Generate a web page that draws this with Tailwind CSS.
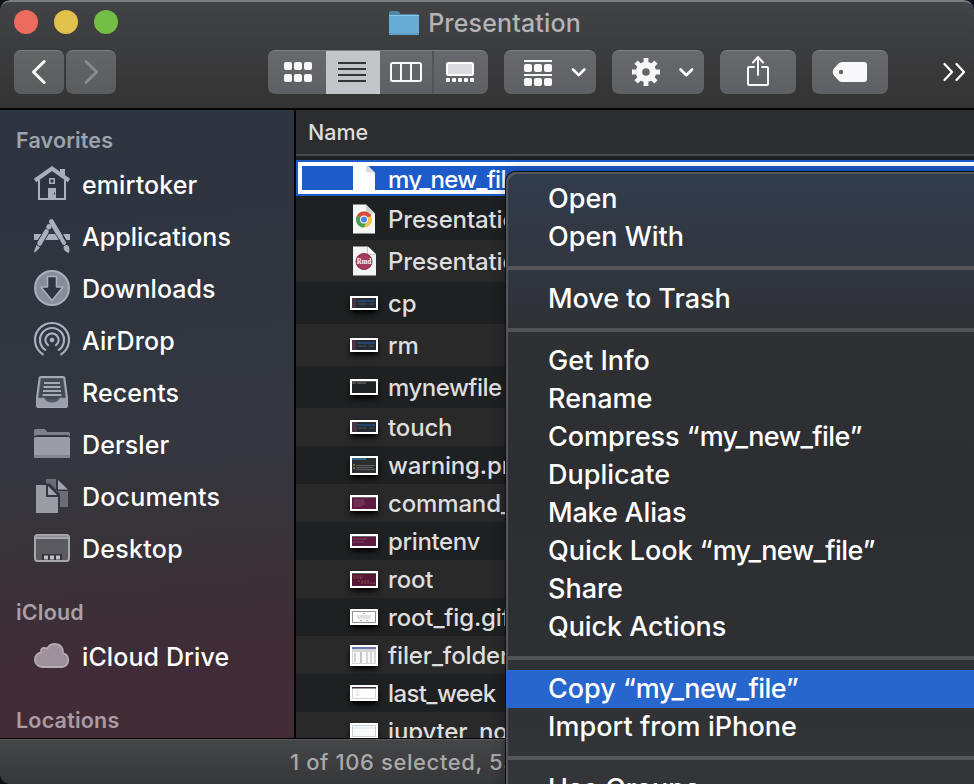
<!DOCTYPE html>
<html lang="en">
<head>
<meta charset="utf-8">
<title>Presentation</title>
<script src="https://cdn.jsdelivr.net/npm/@tailwindcss/browser@4"></script>
</head>
<body class="bg-[#0d111b] font-['Inter','Liberation_Sans',sans-serif] overflow-hidden">
<div class="relative w-[974px] h-[784px] overflow-hidden rounded-[10px] rounded-br-none flex flex-col bg-[#1e1f20]">

  <!-- Title bar and toolbar -->
  <header class="shrink-0 h-[110px] rounded-t-[10px] border-t-2 border-t-[#7c7d7f] border-b-2 border-b-[#050505] bg-linear-to-b from-[#424346] to-[#333333] flex flex-col">
    <div class="h-[48px] relative flex items-center justify-center">
      <svg class="absolute left-[14px] top-[8px]" width="104" height="24"><circle cx="12" cy="12" r="12" fill="#ed6a5e"/><circle cx="52" cy="12" r="12" fill="#e1c04c"/><circle cx="92" cy="12" r="12" fill="#72be47"/></svg>
      <div class="flex items-center gap-[9px] pb-[6px] pr-[4px]">
        <svg width="30" height="24" viewBox="0 0 30 24"><path d="M0 2Q0 0 2 0H8Q9.500 0 10.500 1.500L11.500 3H28Q30 3 30 5V10H0Z" fill="#4f87a8"/><path d="M0 5H30V22.500Q30 24 28.500 24H1.500Q0 24 0 22.500Z" fill="#68add5"/><path d="M0 4.500H30" stroke="#86c6e6" stroke-width="1"/><path d="M0 22.800H30" stroke="#5795ba" stroke-width="1.200"/></svg>
        <span class="text-[25px] leading-[30px] font-[450] text-[#b4b4b6] tracking-[0.150px]">Presentation</span>
      </div>
    </div>
    <div class="flex h-[44px] pl-[14px]">
      <div class="flex gap-[2px]">
        <button class="w-[50px] h-[44px] rounded-[7px] bg-linear-to-b from-[#646567] to-[#5b5c5e] border-t border-[#7c7d7f]"><svg class="-mt-px" width="50" height="44" fill="none" stroke="#fff" stroke-width="3" stroke-linecap="round" stroke-linejoin="round"><path d="M30.200 11.500 19.500 22 30.200 32.500"/></svg></button>
        <button class="w-[50px] h-[44px] rounded-[7px] bg-linear-to-b from-[#646567] to-[#5b5c5e] border-t border-[#7c7d7f]"><svg class="-mt-px" width="50" height="44" fill="none" stroke="#8b8c8e" stroke-width="2.600" stroke-linecap="round" stroke-linejoin="round"><path d="M20 11.500 30.700 22 20 32.500"/></svg></button>
      </div>
      <div class="ml-[152px] w-[220px] h-[44px] rounded-[7px] overflow-hidden bg-linear-to-b from-[#68696c] to-[#5f6063] flex border-t border-[#7c7d80]">
        <svg class="-mt-px" width="58" height="44" fill="#f8f8fa"><rect x="16" y="12" width="8" height="8" rx="2"/><rect x="26" y="12" width="8" height="8" rx="2"/><rect x="36" y="12" width="8" height="8" rx="2"/><rect x="16" y="24" width="8" height="8" rx="2"/><rect x="26" y="24" width="8" height="8" rx="2"/><rect x="36" y="24" width="8" height="8" rx="2"/></svg>
        <svg class="-mt-px bg-[#c4c5c8]" width="54" height="44" fill="#343437"><path d="M12 12h28v2H12zM12 18h28v2H12zM12 24h28v2H12zM12 30h28v2H12z"/></svg>
        <svg class="-mt-px" width="52" height="44" fill="none" stroke="#f8f8fa" stroke-width="2"><rect x="11" y="13" width="30" height="18" rx="1.500"/><path d="M21 13v18M31 13v18"/></svg>
        <svg class="-mt-px border-l-2 border-[#535457]" width="56" height="44"><rect x="13" y="13" width="26" height="12" rx="1.500" fill="#dcdce0" stroke="#fff" stroke-width="2"/><g fill="#f8f8fa"><rect x="12" y="28" width="4" height="4" rx="1"/><rect x="18" y="28" width="4" height="4" rx="1"/><rect x="24" y="28" width="4" height="4" rx="1"/><rect x="30" y="28" width="4" height="4" rx="1"/><rect x="36" y="28" width="4" height="4" rx="1"/></g></svg>
      </div>
      <button class="ml-4 w-[92px] h-[44px] rounded-[7px] bg-linear-to-b from-[#68696c] to-[#5f6063] border-t border-[#7c7d80]"><svg class="-mt-px" width="92" height="44" fill="#f8f8fa"><path d="M20 10h28v2H20zM20 24h28v2H20z"/><rect x="20" y="14" width="8" height="8" rx="2"/><rect x="30" y="14" width="8" height="8" rx="2"/><rect x="40" y="14" width="8" height="8" rx="2"/><rect x="20" y="28" width="8" height="8" rx="2"/><rect x="30" y="28" width="8" height="8" rx="2"/><rect x="40" y="28" width="8" height="8" rx="2"/><path d="M69 19.500 74.700 25.200 80.400 19.500" fill="none" stroke="#fff" stroke-width="2.600" stroke-linecap="round" stroke-linejoin="round"/></svg></button>
      <button class="ml-4 w-[92px] h-[44px] rounded-[7px] bg-linear-to-b from-[#68696c] to-[#5f6063] border-t border-[#7c7d80]"><svg class="-mt-px" width="92" height="44"><g transform="translate(34 22)" stroke="#f8f8fa"><circle r="7" fill="none" stroke-width="6.400"/><path d="M0-9V-14M0 9V14M-9 0H-14M9 0H14M-6.400-6.400-9.900-9.900M6.400 6.400 9.900 9.900M-6.400 6.400-9.900 9.900M6.400-6.400 9.900-9.900" stroke-width="4.800"/></g><path d="M68.500 19.500 74.300 25.200 80.100 19.500" fill="none" stroke="#fff" stroke-width="2.600" stroke-linecap="round" stroke-linejoin="round"/></svg></button>
      <button class="ml-4 w-[76px] h-[44px] rounded-[7px] bg-linear-to-b from-[#68696c] to-[#5f6063] border-t border-[#7c7d80]"><svg class="-mt-px" width="76" height="44" fill="none" stroke="#f8f8fa" stroke-width="2" stroke-linejoin="round" stroke-linecap="round"><path d="M34 17H29Q28 17 28 18V34Q28 35 29 35H47Q48 35 48 34V18Q48 17 47 17H42M38 25V7.500M33 12.500 38 7 43 12.500"/></svg></button>
      <button class="ml-4 w-[76px] h-[44px] rounded-[7px] bg-linear-to-b from-[#68696c] to-[#5f6063] border-t border-[#7c7d80]"><svg class="-mt-px" width="76" height="44"><path fill-rule="evenodd" fill="#f8f8fa" d="M30 12H52Q55 12 55 15V29Q55 32 52 32H30Q28 32 26.500 30.500L22 25.500Q19.500 22 22 18.500L26.500 13.500Q28 12 30 12ZM29 19.800A2.200 2.200 0 1 0 29 24.200A2.200 2.200 0 1 0 29 19.800Z"/></svg></button>
      <svg class="ml-[54px]" width="26" height="44" fill="none" stroke="#fff" stroke-width="2.300" stroke-linecap="round" stroke-linejoin="round"><path d="M2.500 14 10 22 2.500 30M14.500 14 22 22 14.500 30"/></svg>
    </div>
  </header>

  <main class="flex h-[628px] shrink-0">
    <!-- Sidebar -->
    <aside class="w-[296px] shrink-0 border-r-2 border-black overflow-hidden bg-[linear-gradient(175deg,#2e3440_0%,#30353f_35%,#343740_50%,#383339_68%,#3f2c36_85%,#432c37_100%)]">
      <h2 class="h-[49px] pt-[15px] pl-4 text-[21.500px] leading-[30px] font-semibold text-[#9da3ae] tracking-[0.150px]">Favorites</h2>
      <ul class="text-white text-[25px] font-medium tracking-[0.100px]">
        <li class="h-[52px] flex items-center gap-3 pl-[34px]">
          <svg class="overflow-visible" width="36" height="36"><path d="M26 2h5v9l-5-4z" fill="#a9afbb"/><path d="M1 13.500 18 1.500 35 13.500" fill="none" stroke="#a9afbb" stroke-width="4"/><path d="M5 13V32H31V13" fill="none" stroke="#a9afbb" stroke-width="2"/><path d="M15.800 11.800h4.400v4.400h-4.400z" fill="none" stroke="#a9afbb" stroke-width="1.600"/><path d="M14 21h8v11h-8z" fill="#a9afbb"/><path d="M20 25.500h1v2h-1z" fill="#2e3440"/></svg>
          <span class="pt-[2px]">emirtoker</span></li>
        <li class="h-[52px] flex items-center gap-3 pl-[34px]">
          <svg class="overflow-visible" width="36" height="36"><path d="M0 15h36v6H0z" fill="#a9afbb"/><g stroke-linecap="round"><path d="M16 6.500 4 27" stroke="#2f3540" stroke-width="6.500"/><path d="M17.500 2 32 27" stroke="#2f3540" stroke-width="6.800"/><path d="M17.300 2.500 26.500 18" stroke="#a9afbb" stroke-width="4.800"/><path d="M28 20.500 30 24" stroke="#a9afbb" stroke-width="4"/><path d="M15 7.500 14.800 8" stroke="#a9afbb" stroke-width="5"/><path d="M12.500 12.500 5.500 24.500" stroke="#a9afbb" stroke-width="4.600"/></g><path d="M2.500 26 6 28.500 1 33.500 0 32.500Z" fill="#a9afbb"/><path d="M29.500 27.500Q33.500 24.500 35 28Q36 31 35 34Q29.500 32.500 29.500 27.500Z" fill="#a9afbb"/></svg>
          <span class="pt-[2px] tracking-[0.030px]">Applications</span></li>
        <li class="h-[52px] flex items-center gap-3 pl-[34px]">
          <svg class="overflow-visible" width="36" height="36"><circle cx="18" cy="17" r="17" fill="#878d99" stroke="#a9afbb" stroke-width="2"/><path d="M13.500 5.500H22.500V16H29L18 29.500 7 16H13.500Z" fill="#2f3540" stroke="#a9afbb" stroke-width="1.600" stroke-linejoin="round"/></svg>
          <span class="pt-[2px] tracking-[0.030px]">Downloads</span></li>
        <li class="h-[52px] flex items-center gap-3 pl-[34px]">
          <svg class="overflow-visible" width="36" height="36"><circle cx="18" cy="17" r="2.300" fill="#a9afbb"/><g fill="none" stroke="#a9afbb" stroke-width="2.200"><path d="M9.500 31.700A17 17 0 1 1 26.500 31.700"/><path d="M12 27.400A12 12 0 1 1 24 27.400"/><path d="M14.700 22.700A6.600 6.600 0 1 1 21.300 22.700"/></g></svg>
          <span class="pt-[2px]">AirDrop</span></li>
        <li class="h-[52px] flex items-center gap-3 pl-[34px]">
          <svg class="overflow-visible" width="36" height="36"><path d="M7 2H29Q30.200 2 30.400 3L33 23V31Q33 32 32 32H4Q3 32 3 31V23L5.600 3Q5.800 2 7 2Z" fill="#565b66" stroke="#a5a9b4" stroke-width="2"/><path d="M7.500 4H28.500L31 22H27Q24 22 22.500 24.500H13.500Q12 22 9 22H5Z" fill="#444853"/><path d="M10 7h16v2H10zM9.500 11h17v2h-17zM9 15h18v2H9zM8.500 19h19v2h-19z" fill="#a5a9b4"/><path d="M3 23H10Q12 27.500 18 27.500T26 23H33V32H3Z" fill="#9b9fab"/></svg>
          <span class="pt-[2px]">Recents</span></li>
        <li class="h-[52px] flex items-center gap-3 pl-[34px]">
          <svg class="overflow-visible" width="36" height="36"><path d="M0 3.500Q0 2 1.500 2H10Q11.500 2 12.300 3.500L13 5H34.500Q36 5 36 6.500V9H35Q34.500 8 33 8H3Q1.500 8 1 9H0Z" fill="#7d808a"/><path d="M0 11.500Q0 10 1.500 10H34.500Q36 10 36 11.500V29.500Q36 31 34.500 31H1.500Q0 31 0 29.500Z" fill="#9a9ca6"/><path d="M0 28H36V29.500Q36 31 34.500 31H1.500Q0 31 0 29.500Z" fill="#84868f"/></svg>
          <span class="pt-[2px]">Dersler</span></li>
        <li class="h-[52px] flex items-center gap-3 pl-[34px]">
          <svg class="overflow-visible" width="36" height="36"><path d="M12 0H22V12H34V28H26V15L16 4.500H12Z" fill="#6a6c76"/><path d="M24 1 34 10.500H24Z" fill="#a3a5af"/><path d="M2 6H12V18H24V34H2Z" fill="#9a9ca6"/><path d="M14 7 23 16H14Z" fill="#a3a5af"/></svg>
          <span class="pt-[2px] tracking-[0.200px]">Documents</span></li>
        <li class="h-[52px] flex items-center gap-3 pl-[34px]">
          <svg class="overflow-visible" width="36" height="36"><rect x="1" y="4" width="34" height="26" rx="2.500" fill="#5b5a61" stroke="#a8a6ad" stroke-width="2"/><path d="M2 4H34V8H2Z" fill="#a8a6ad"/><path d="M2 5.300H34" stroke="#85848b" stroke-width="1"/><path d="M8 23H28V29H8Z" fill="#37353c"/><path d="M10 24.500h4v4h-4zM16 24.500h4v4h-4zM22 24.500h4v4h-4z" fill="#c2c0c6"/></svg>
          <span class="pt-[2px] tracking-[0.280px]">Desktop</span></li>
      </ul>
      <h2 class="h-[56px] pt-[22px] pl-4 text-[21.500px] leading-[30px] font-semibold text-[#ab9fa8] tracking-[0.200px]">iCloud</h2>
      <div class="h-[52px] flex items-center gap-3 pl-[34px] text-white text-[25px] font-medium tracking-[0.100px]">
          <svg class="overflow-visible" width="36" height="36"><path d="M8 28A7.300 7.300 0 0 1 7 13.500Q6.500 8.500 11 9Q13 9 13.500 9.500Q15.500 5 21 5Q29.500 5.500 29 14A7.200 7.200 0 0 1 28.500 28Z" fill="#9f919b" stroke="#b5a9b2" stroke-width="1.800"/></svg>
          <span class="pt-[2px]">iCloud Drive</span></div>
      <h2 class="h-[56px] pt-[22px] pl-4 text-[21.500px] leading-[30px] font-semibold text-[#ab9ba5] tracking-[0.200px]">Locations</h2>
    </aside>

    <!-- File list -->
    <section class="flex-1 min-w-0 overflow-hidden bg-[#1f2021] text-[#dededf] text-[24px] font-[450] tracking-[-0.150px] whitespace-nowrap">
      <div class="h-[46px] border-b-2 border-[#4b4b4c] bg-[#2c2d2e] pl-3 pt-[7px] text-[21.500px] leading-[30px] tracking-[0px] text-[#dcdcdc]">Name</div>
      <div class="h-[4px]"></div>
      <div class="relative h-[38px]">
        <div class="h-[36px] bg-[#1d5bc9] flex items-center gap-[10px] pl-[54px] text-white">
          <svg width="28" height="36"><path d="M3 4H16L25 13V32H3Z" fill="#fff"/><path d="M16 4V11.500Q16 12.500 17 12.500H25Z" fill="#dcdcdc"/></svg>
          <span class="pt-[3px] tracking-[-0.750px]">my_new_file</span>
        </div>
        <div class="absolute left-[2px] right-0 top-[2px] h-[32px] border-4 border-r-0 border-white"></div>
      </div>
      <div class="h-[42px] flex items-center gap-[10px] pl-[54px]">
        <svg width="28" height="30"><path d="M3 .5H16L25 9.500V29.500H3Z" fill="#f6f6f6"/><path d="M16 .5V8Q16 9.500 17.500 9.500H25Z" fill="#cfcfcf"/><g transform="translate(14 15.500)"><circle r="8" fill="#f2c443"/><path d="M0 0 -6.930-4A8 8 0 0 1 6.930-4Z" fill="#d8483b"/><path d="M0 0-6.930-4A8 8 0 0 0 0 8L3 1Z" fill="#43a05a"/><path d="M0-4H6.930" stroke="#d8483b" stroke-width="2"/><circle r="3.900" fill="#fff"/><circle r="3" fill="#4b83e6"/></g></svg>
        <span class="pt-[2px]">Presentation.html</span></div>
      <div class="h-[42px] bg-[#29292a] flex items-center gap-[10px] pl-[54px]">
        <svg width="28" height="30"><path d="M3 .5H17L26 8.500V29.500H3Z" fill="#f4f4f4"/><path d="M18 .5V6Q18 8 20 8H26Z" fill="#fff"/><path d="M17.500.5V7Q17.500 8.500 19 8.500H26" fill="none" stroke="#c4c4c4" stroke-width="1"/><circle cx="14" cy="15.500" r="8" fill="#a53a63" stroke="#7f2b4b" stroke-width="1"/><text x="6.800" y="18" font-family="Liberation Serif" font-weight="bold" font-size="7.500" textLength="14.400" lengthAdjust="spacingAndGlyphs" letter-spacing="0" fill="#fff">Rmd</text></svg>
        <span class="pt-[2px]">Presentation.Rmd</span></div>
      <div class="h-[42px] flex items-center gap-[10px] pl-[54px]">
        <svg class="border-2 border-white shadow-md shadow-black" width="28" height="14"><path d="M0 0h24v10H0z" fill="#252b32"/><path d="M0 0h4v10H0z" fill="#4b3346"/><path d="M5 2h18v2H5z" fill="#24456f"/><path d="M6 6h9M17 6h5" stroke="#48505c"/></svg>
        <span class="pt-[2px]">cp</span></div>
      <div class="h-[42px] bg-[#29292a] flex items-center gap-[10px] pl-[54px]">
        <svg class="border-2 border-white shadow-md shadow-black" width="28" height="14"><path d="M0 0h24v10H0z" fill="#252b32"/><path d="M0 0h4v10H0z" fill="#4b3346"/><path d="M5 2h18v2H5z" fill="#24456f"/><path d="M6 6h9M17 6h5" stroke="#48505c"/></svg>
        <span class="pt-[2px]">rm</span></div>
      <div class="h-[42px] flex items-center gap-[10px] pl-[54px]">
        <svg class="border-2 border-white shadow-md shadow-black" width="28" height="16"><path d="M0 0h24v12H0z" fill="#202324"/><path d="M0 0h24v1H0z" fill="#5a5b60"/><path d="M0 2h4" stroke="#667a55"/><path d="M5 2h9" stroke="#777"/></svg>
        <span class="pt-[2px] tracking-[-0.500px]">mynewfile</span></div>
      <div class="h-[38px] bg-[#29292a] flex items-center gap-[10px] pl-[54px]">
        <svg class="border-2 border-white shadow-md shadow-black" width="28" height="14"><path d="M0 0h24v10H0z" fill="#252b32"/><path d="M0 0h5v10H0z" fill="#4b3346"/><path d="M5 2h18v2H5z" fill="#24456f"/><path d="M6 6h9M17 6h5" stroke="#48505c"/></svg>
        <span class="pt-[2px]">touch</span></div>
      <div class="h-[38px] flex items-center gap-[10px] pl-[54px]">
        <svg class="border-2 border-white shadow-md shadow-black" width="28" height="19"><path d="M0 0h24v15H0z" fill="#2c2e2f"/><path d="M0 1h14" stroke="#33658e" stroke-width="2"/><path d="M1 7h2M1 10h2" stroke="#c0b84a"/><path d="M4 7.500h19M4 9.500h17M4 11.500h19" stroke="#6b6c6d" stroke-width=".8"/></svg>
        <span class="pt-[2px]">warning.png</span></div>
      <div class="h-[38px] bg-[#29292a] flex items-center gap-[10px] pl-[54px]">
        <svg class="border-2 border-white shadow-md shadow-black" width="28" height="16"><path d="M0 0h24v12H0z" fill="#5e1a40"/><path d="M0 0h24v1H0z" fill="#67666b"/><path d="M2 3h10M2 5h10M2 7h11M2 9h8" stroke="#8b5373" stroke-width=".8"/></svg>
        <span class="pt-[2px]">command_line</span></div>
      <div class="h-[38px] flex items-center gap-[10px] pl-[54px]">
        <svg class="border-2 border-white shadow-md shadow-black" width="28" height="14"><path d="M0 0h24v10H0z" fill="#5e1a40"/><path d="M0 0h24v1H0z" fill="#67666b"/><path d="M1 3h14M1 6h11" stroke="#844b6c" stroke-width=".8"/></svg>
        <span class="pt-[2px] tracking-[-0.350px]">printenv</span></div>
      <div class="h-[38px] bg-[#29292a] flex items-center gap-[10px] pl-[54px]">
        <svg class="border-2 border-white shadow-md shadow-black" width="28" height="17"><path d="M0 0h24v13H0z" fill="#591536"/><path d="M0 0h24v1H0z" fill="#57685b"/><path d="M1 3h10M2 5h8M6 8h12M9 10h14" stroke="#8b6257" stroke-width=".8" stroke-dasharray="2 1"/></svg>
        <span class="pt-[2px]">root</span></div>
      <div class="h-[38px] flex items-center gap-[10px] pl-[54px]">
        <svg class="border-2 border-white shadow-md shadow-black" width="28" height="16"><path d="M0 0h24v12H0z" fill="#fff"/><path d="M.5.5h23v11H.5z" fill="none" stroke="#8f9191"/><path d="M11 2.500h2M5 5h14M6 7h12M8 9.500h3M14 9.500h3" stroke="#aaa" stroke-width="1" stroke-dasharray="2 .6"/></svg>
        <span class="pt-[2px]">root_fig.gif</span></div>
      <div class="h-[38px] bg-[#29292a] flex items-center gap-[10px] pl-[54px]">
        <svg class="border-2 border-white shadow-md shadow-black" width="28" height="21"><path d="M0 0h24v17H0z" fill="#d6d7dc"/><path d="M0 0h24v2H0z" fill="#6d75aa"/><path d="M1 5h7v11H1zM10 5h12v11H10z" fill="#f8f8f8"/><path d="M9 5v11M15 5v11M19 5v11M3 6v9" stroke="#b0b1b6"/></svg>
        <span class="pt-[2px]">filer_folder</span></div>
      <div class="h-[38px] flex items-center gap-[10px] pl-[54px]">
        <svg class="border-2 border-white shadow-md shadow-black" width="28" height="16"><path d="M0 0h24v12H0z" fill="#fff"/><path d="M.5.5h23v11H.5z" fill="none" stroke="#d5d6d9"/><path d="M0 0h24v1.500H0z" fill="#3a3138"/><path d="M4 4h3M4 6h2M4 8h4" stroke="#ddd"/></svg>
        <span class="pt-[2px] tracking-[-0.600px]">last_week</span></div>
      <div class="h-[38px] bg-[#29292a] flex items-center gap-[10px] pl-[54px]">
        <svg class="border-2 border-white shadow-md shadow-black" width="28" height="16"><path d="M0 0h24v12H0z" fill="#f8fafb"/><path d="M.5.5h23v11H.5z" fill="none" stroke="#ccd0d5"/><path d="M1 3h22" stroke="#dae6ee"/></svg>
        <span class="pt-[2px]">jupyter_notebook</span></div>
    </section>
  </main>

  <!-- Status bar -->
  <footer class="h-[46px] shrink-0 border-t border-black bg-linear-to-b from-[#454648] to-[#363738] shadow-[inset_0_1px_0_#59595b] pl-[290px] pt-[8px] text-[22px] leading-[30px] font-[450] tracking-[0.600px] text-[#a9a9ab] whitespace-nowrap">1 of 106 selected, 53.42 GB</footer>

  <!-- Context menu -->
  <div class="absolute left-[506px] top-[172px] w-[500px] h-[640px] rounded-tl-[10px] overflow-hidden bg-[linear-gradient(180deg,#313c4d_0px,#31363f_90px,#2f3033_170px,#2d2e31_300px,#2e2f33_450px,#343538_612px)] shadow-[inset_2px_2px_0_#54575c,0_0_0_1px_#0c0d0f,0_0_14px_rgba(0,0,0,0.35)] text-white text-[27px] font-medium leading-[38px] whitespace-nowrap">
    <div class="pt-[8px]">
      <div class="h-[38px] pl-[42px]">Open</div>
      <div class="h-[38px] pl-[42px]">Open With</div>
      <div class="h-[4px] my-[10px] bg-[#54565a]"></div>
      <div class="h-[38px] pl-[42px] tracking-[-0.070px]">Move to Trash</div>
      <div class="h-[4px] my-[10px] bg-[#535457]"></div>
      <div class="h-[38px] pl-[42px]">Get Info</div>
      <div class="h-[38px] pl-[42px]">Rename</div>
      <div class="h-[38px] pl-[42px]">Compress “<span class="tracking-[-0.600px]">my_new_file</span>”</div>
      <div class="h-[38px] pl-[42px]">Duplicate</div>
      <div class="h-[38px] pl-[42px] tracking-[-0.180px]">Make Alias</div>
      <div class="h-[38px] pl-[42px]">Quick Look “<span class="tracking-[-0.600px]">my_new_file</span>”</div>
      <div class="h-[38px] pl-[42px]">Share</div>
      <div class="h-[38px] pl-[42px] tracking-[-0.080px]">Quick Actions</div>
      <div class="h-[4px] my-[10px] bg-[#535457]"></div>
      <div class="h-[38px] pl-[42px] bg-[#2766cd]">Copy “<span class="tracking-[-0.600px]">my_new_file</span>”</div>
      <div class="h-[38px] pl-[42px] tracking-[0.050px]">Import from iPhone</div>
      <div class="h-[4px] my-[10px] bg-[#56575a]"></div>
      <div class="h-[38px] pl-[42px]">Use Groups</div>
    </div>
  </div>
</div>
</body>
</html>
